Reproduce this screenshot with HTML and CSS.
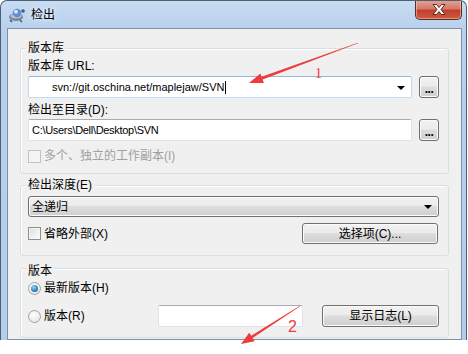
FILE: index.html
```html
<!DOCTYPE html>
<html>
<head>
<meta charset="utf-8">
<title>检出</title>
<link rel="stylesheet" href="styles.css">
</head>
<body>
<div class="window">
  <!-- title bar -->
  <div class="titlebar">
    <svg class="app-icon" width="18" height="16" viewBox="0 0 18 16">
      <ellipse cx="8" cy="10" rx="7" ry="4" fill="#7d8794"/>
      <ellipse cx="8" cy="9" rx="5.5" ry="2.6" fill="#b9c3cf"/>
      <circle cx="9" cy="6" r="4.3" fill="#5f8fd0"/>
      <circle cx="8" cy="4.8" r="2" fill="#cfe2fb"/>
      <circle cx="15" cy="4" r="1.8" fill="#505a66"/>
      <path d="M2 13 L4 15 M12 13 L14 15" stroke="#505a66" stroke-width="1.5"/>
    </svg>
    <span class="caption">检出</span>
    <div class="close">
      <svg width="16" height="11" viewBox="0 0 16 11">
        <path d="M2 0.5 L5.5 0.5 L8 3.5 L10.5 0.5 L14 0.5 L10 5.5 L14 10.5 L10.5 10.5 L8 7.5 L5.5 10.5 L2 10.5 L6 5.5 Z" fill="#fff" stroke="#5a2a22" stroke-width="1"/>
      </svg>
    </div>
  </div>

  <div class="client">
    <!-- repository -->
    <div class="group group-repo">
      <div class="group-title">版本库</div>
      <div class="label first">版本库 URL:</div>
      <div class="field-row">
        <div class="edit focused"><span class="value url">svn://git.oschina.net/maplejaw/SVN</span><span class="caret"></span><span class="drop-arrow"></span></div>
        <button class="browse">...</button>
      </div>
      <div class="label second">检出至目录(D):</div>
      <div class="field-row dir-row">
        <div class="edit"><span class="value path">C:\Users\Dell\Desktop\SVN</span></div>
        <button class="browse">...</button>
      </div>
      <div class="check disabled"><span class="box"></span>多个、独立的工作副本(I)</div>
    </div>

    <!-- depth -->
    <div class="group group-depth">
      <div class="group-title">检出深度(E)</div>
      <div class="dropdown">全递归<span class="drop-arrow"></span></div>
      <div class="option-row">
        <div class="check"><span class="box"></span>省略外部(X)</div>
        <button class="btn btn-items">选择项(C)...</button>
      </div>
    </div>

    <!-- revision -->
    <div class="group group-rev">
      <div class="group-title">版本</div>
      <div class="radio checked"><span class="dot"></span>最新版本(H)</div>
      <div class="rev-row">
        <div class="radio rev-label"><span class="dot"></span>版本(R)</div>
        <div class="edit rev-edit"></div>
        <button class="btn btn-log">显示日志(L)</button>
      </div>
    </div>
  </div>
</div>

<!-- red annotations drawn on top of the screenshot -->
<svg class="marks" width="468" height="354" viewBox="0 0 468 354">
  <polygon points="358.1,43.3 262.67,79.59 263.87,82.88 249,83 260.43,73.48 261.63,76.77 357.9,42.7" fill="#ee3b3b"/>
  <text x="315" y="78" class="mark-num serif">1</text>
  <polygon points="300.16,306.25 252.63,338.05 254.64,341.16 241,344 249.22,332.76 251.23,335.87 299.84,305.75" fill="#ee3b3b"/>
  <text x="288" y="332" class="mark-num">2</text>
</svg>
</body>
</html>
```

FILE: styles.css
```css
* {
  box-sizing: border-box;
}

body {
  margin: 0;
  background-color: #ffffff;
  font-family: "Liberation Sans", "Noto Sans CJK SC", sans-serif;
  font-size: 12px;
  line-height: 14px;
  color: #000;
  position: relative;
  width: 468px;
  height: 354px;
  overflow: hidden;
}

/* window frame */
.window {
  width: 467px;
  height: 340px;
  border: 1px solid #4f5f72;
  border-bottom: none;
  border-radius: 7px 7px 0 0;
  background: linear-gradient(#c8dcf3, #b7d0ed 30px, #b4cdec);
  display: flex;
  flex-direction: column;
  overflow: hidden;
}

.titlebar {
  height: 27px;
  display: flex;
  align-items: center;
  padding-left: 7px;
}

.app-icon {
  margin-top: 1px;
}

.caption {
  margin-left: 5px;
  text-shadow: 0 0 6px #eaf3fc, 0 0 3px #eaf3fc;
}

.close {
  margin-left: auto;
  margin-right: 4px;
  align-self: flex-start;
  margin-top: -1px;
  width: 47px;
  height: 20px;
  border: 1px solid #5b2c25;
  border-top: none;
  border-radius: 0 0 5px 5px;
  background: linear-gradient(#e4a598, #d57a68 45%, #c1402c 55%, #cf5a40);
  box-shadow: inset 0 0 0 1px rgba(255, 210, 200, 0.5);
  display: flex;
  align-items: center;
  justify-content: center;
}

/* client area */
.client {
  flex: 1;
  margin: 0 4px 0 6px;
  border: 1px solid #7f90a3;
  background-color: #f0f0f0;
  padding-top: 19px;
}

.group {
  width: 429px;
  margin-left: 12px;
  border: 1px solid #d5dfe5;
  border-radius: 3px;
  box-shadow: inset 1px 1px 0 #ffffff;
  padding: 0 9px 0 7px;
}

.group-title {
  width: fit-content;
  margin: -8px 0 0 -2px;
  padding: 0 2px;
  background-color: #f0f0f0;
}

.group-depth {
  margin-top: 11px;
  padding-bottom: 11px;
}

.group-repo {
  padding-bottom: 10px;
}

.group-rev {
  margin-top: 12px;
  padding-bottom: 10px;
}

.group-rev .group-title {
  margin-top: -5px;
}

.label.first {
  margin-top: 4px;
}

.label.second {
  margin-top: 5px;
}

.field-row {
  display: flex;
  gap: 7px;
  height: 22px;
  margin-top: 3px;
}

.field-row.dir-row {
  margin-top: 2px;
}

/* text boxes */
.edit {
  flex: 1;
  position: relative;
  display: flex;
  align-items: center;
  background-color: #ffffff;
  border: 1px solid #e2e3ea;
  border-top-color: #abadb3;
  border-radius: 2px;
  padding-left: 3px;
}

.edit.focused {
  border-color: #c5daed;
  border-top-color: #98b7d6;
}

.value {
  white-space: nowrap;
  font-size: 11px;
}

.value.url {
  margin-left: 20px;
}

.value.path {
  letter-spacing: -0.3px;
}

.caret {
  width: 1px;
  height: 13px;
  background-color: #000;
  margin-left: 1px;
}

.drop-arrow {
  position: absolute;
  right: 6px;
  top: 9px;
  width: 0;
  height: 0;
  border-left: 4px solid transparent;
  border-right: 4px solid transparent;
  border-top: 4px solid #000;
}

/* push buttons */
.browse,
.btn,
.dropdown {
  font-family: inherit;
  font-size: 12px;
  line-height: 14px;
  border: 1px solid #707070;
  border-radius: 3px;
  background: linear-gradient(#f2f2f2, #ebebeb 45%, #dddddd 50%, #cfcfcf);
  box-shadow: inset 0 0 0 1px #fbfbfb;
  color: #000;
  padding: 0;
}

.browse {
  width: 20px;
  font-weight: bold;
  padding-top: 4px;
  letter-spacing: -0.5px;
}

.dropdown {
  position: relative;
  height: 21px;
  margin-top: 4px;
  padding: 3px 0 0 3px;
}

.dropdown .drop-arrow {
  right: 6px;
  top: 8px;
}

.option-row {
  display: flex;
  align-items: center;
  justify-content: space-between;
  height: 21px;
  margin-top: 6px;
}

.btn-items {
  width: 136px;
  height: 21px;
  margin-right: 1px;
}

/* check boxes */
.check {
  display: flex;
  align-items: center;
  gap: 3px;
  margin-top: 8px;
}

.option-row .check {
  margin-top: 0;
}

.check .box {
  width: 13px;
  height: 13px;
  border: 1px solid #8e8f8f;
  background: linear-gradient(135deg, #dcdcdc, #fefefe);
  box-shadow: inset 0 0 0 1px #f4f4f4;
}

.check.disabled {
  color: #a0a0a0;
}

.check.disabled .box {
  border-color: #c2c2c2;
  background: #f4f4f4;
}

/* radio buttons */
.radio {
  display: flex;
  align-items: center;
  gap: 3px;
  margin-top: 3px;
}

.radio .dot {
  width: 13px;
  height: 13px;
  border-radius: 50%;
  border: 1px solid #a3a3a3;
  background: radial-gradient(circle at 40% 35%, #ffffff, #dedede);
  display: flex;
  align-items: center;
  justify-content: center;
}

.radio.checked .dot::after {
  content: "";
  width: 7px;
  height: 7px;
  border-radius: 50%;
  background: radial-gradient(circle at 40% 35%, #8fd3ff, #1f74b8 70%, #174f82);
}

.rev-row {
  display: flex;
  align-items: center;
  height: 22px;
  margin-top: 10px;
}

.rev-label {
  width: 130px;
  margin-top: 0;
}

.rev-edit {
  flex: none;
  width: 145px;
  height: 22px;
}

.btn-log {
  width: 117px;
  height: 22px;
  margin-left: 19px;
}

/* annotation overlay */
.marks {
  position: absolute;
  left: 0;
  top: 0;
  pointer-events: none;
}

.mark-num {
  fill: #ee3b3b;
  font-family: "Liberation Sans", sans-serif;
  font-size: 16px;
}

.mark-num.serif {
  font-family: "Liberation Serif", serif;
  font-size: 14px;
}
```
